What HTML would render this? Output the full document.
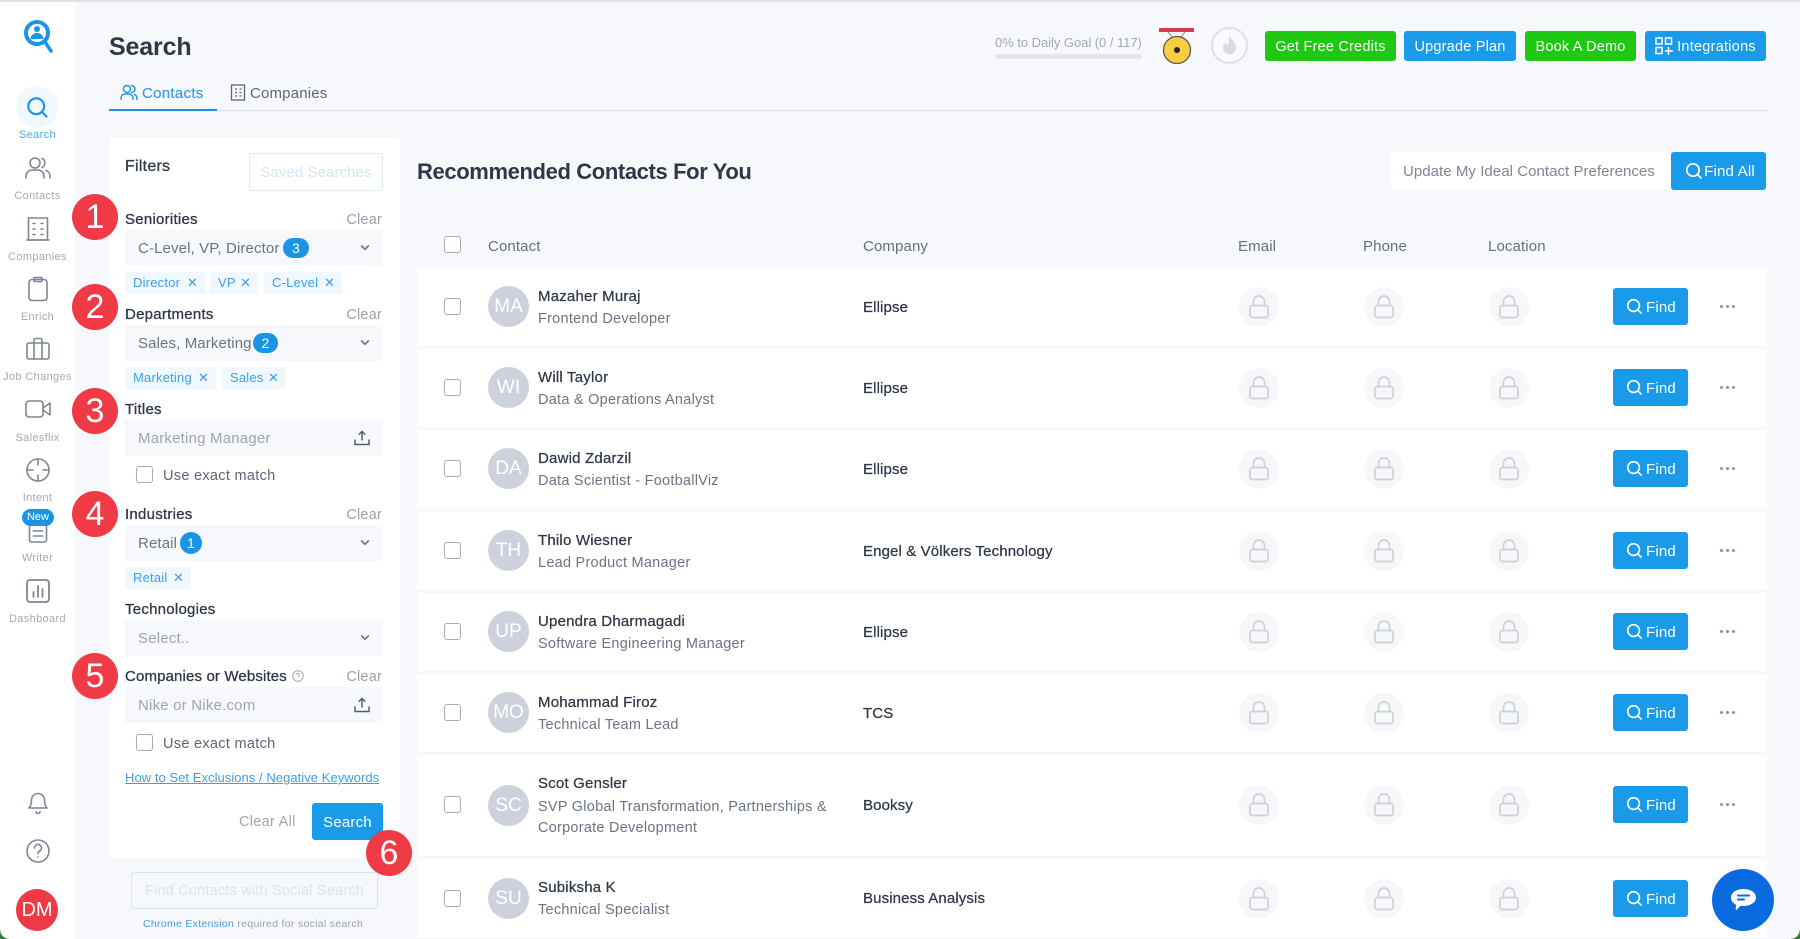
<!DOCTYPE html>
<html lang="en"><head><meta charset="utf-8"><title>Search</title>
<style>
*{box-sizing:border-box}
html,body{margin:0;padding:0}
body{width:1800px;height:939px;position:relative;overflow:hidden;background:#f7f8fb;font-family:"Liberation Sans",sans-serif;color:#2f3747;font-size:15px}
.a,.t,.row,.sel,.tag,.btn,.cb,.bub,.sl,.si{position:absolute}
.t{white-space:nowrap;line-height:20px;margin-top:1px}
.lbl{font-size:15px;color:#2f3747;letter-spacing:.25px;-webkit-text-stroke:.3px currentColor;left:125px}
.clr{font-size:14.5px;color:#9ba1ad;right:1418px;letter-spacing:.2px}
.sel{left:125px;width:258px;height:36px;background:#f7f8fb;border-radius:2px;font-size:15px;color:#6b7385;line-height:38px;padding-left:13px;letter-spacing:.12px}
.sel .ph{color:#9ea4b0;letter-spacing:.2px}
.sel svg{position:absolute}
.bd{position:absolute;top:8px;height:20px;background:#1a95e6;color:#fff;border-radius:10px;font-size:14px;line-height:20px;text-align:center}
.tag{height:22px;background:#f1f8fd;color:#3c9fe2;font-size:13px;line-height:22px;padding-left:8px;border-radius:2px;letter-spacing:.2px}
.tag i{position:absolute;top:0;font-style:normal;font-size:13px}
.btn{background:#1a9bea;color:#fff;border-radius:3px;text-align:center;letter-spacing:.2px}
.g{background:#1fc812}
.cb{width:17px;height:17px;border:1.5px solid #a6abb5;border-radius:3px;background:#fff}
.bub{width:46px;height:46px;border-radius:50%;background:#f03a45;color:#fff;font-size:34px;line-height:46px;text-align:center}
.sl{left:0;width:75px;text-align:center;font-size:11px;color:#a3a8b3;letter-spacing:.35px;line-height:14px;white-space:nowrap;margin-top:1px}
.si{fill:none;stroke:#7e8594;stroke-width:1.6;stroke-linecap:round;stroke-linejoin:round}
.row{left:417px;width:1350px;background:#fff}
.row .cb{left:27px;top:50%;margin-top:-9.5px}
.av{position:absolute;left:71px;top:50%;margin-top:-21px;width:41px;height:41px;border-radius:50%;background:#cdd1db;color:#fff;text-align:center;font-size:19px;line-height:41px}
.nm{left:121px;top:18px;font-size:15px;color:#2f3747;letter-spacing:.2px;-webkit-text-stroke:.25px currentColor}
.sb{left:121px;top:40px;font-size:14.5px;color:#6b7385;letter-spacing:.25px}
.co{left:446px;top:50%;margin-top:-9.5px;font-size:15px;color:#2f3747;letter-spacing:.12px;-webkit-text-stroke:.25px currentColor}
.lk{position:absolute;top:50%;margin-top:-20.5px;width:40px;height:40px;border-radius:50%;background:#f6f7f9}
.lk svg{position:absolute;left:10px;top:8px}
.fd{position:absolute;left:1196px;top:50%;margin-top:-19.5px;width:75px;height:37px;background:#1a9bea;border-radius:3px;color:#fff;font-size:15px;line-height:39px;padding-left:33px;letter-spacing:.2px}
.fd svg{position:absolute;left:13px;top:10px}
.dt{position:absolute;left:1303px;top:50%;margin-top:-2.5px;width:3px;height:3px;border-radius:50%;background:#8b919e;box-shadow:6px 0 0 #8b919e,12px 0 0 #8b919e}
.hd{font-size:15px;color:#666e7e;top:236px;letter-spacing:.12px}
</style></head><body>
<svg width="0" height="0" style="position:absolute"><defs>
<symbol id="lock" viewBox="0 0 20 24"><path d="M4.5 11V6.500a5.500 5.500 0 0 1 11 0V11" fill="none" stroke="#cdd1da" stroke-width="1.700"/><rect x="1" y="10.500" width="18" height="12" rx="2.500" fill="none" stroke="#cdd1da" stroke-width="1.700"/></symbol>
<symbol id="sr" viewBox="0 0 18 18"><circle cx="8" cy="8" r="6.200" fill="none" stroke="currentColor" stroke-width="1.700"/><path d="M12.600 12.600L16 16" stroke="currentColor" stroke-width="1.700" stroke-linecap="round"/></symbol>
<symbol id="chev" viewBox="0 0 10 7"><path d="M1.200 1.500L5 5.200 8.800 1.500" fill="none" stroke="#6f7684" stroke-width="1.700"/></symbol>
<symbol id="up" viewBox="0 0 16 16"><path d="M8 10.500V1.600M4.800 4.600L8 1.400l3.200 3.200M1 9.500v5h14v-5" fill="none" stroke="#565e6d" stroke-width="1.500" stroke-linejoin="round"/></symbol>
</defs></svg>

<div class="a" style="left:0;top:0;width:1800px;height:2px;background:#dfe0e6;z-index:5"></div>
<!-- sidebar -->
<div class="a" style="left:0;top:0;width:75px;height:939px;background:#fff"></div>
<svg class="a" style="left:20px;top:16px" width="36" height="40" viewBox="0 0 36 40"><circle cx="17" cy="17" r="11" fill="#fff" stroke="#1a95e6" stroke-width="4"/><circle cx="17" cy="13" r="3" fill="#1a95e6"/><path d="M10.500 23c.5-4 3-6 6.500-6s6 2 6.500 6z" fill="#1a95e6"/><path d="M25 26l6 9" stroke="#1a95e6" stroke-width="3.500" stroke-linecap="round"/></svg>
<div class="a" style="left:16px;top:86px;width:42px;height:42px;border-radius:50%;background:#f0f8fd"></div>
<svg class="a" style="left:26px;top:96px;color:#1a95e6" width="23" height="23"><use href="#sr"/></svg>
<div class="sl" style="top:127px;color:#4fa9e8">Search</div>
<svg class="si" style="left:24px;top:156px" width="28" height="24" viewBox="0 0 28 24"><circle cx="11" cy="7" r="5"/><path d="M2 22v-2a6 6 0 0 1 6-6h6a6 6 0 0 1 6 6v2M18 2.500a5 5 0 0 1 0 9M22 14.500a6 6 0 0 1 4 5.500v2"/></svg>
<div class="sl" style="top:188px">Contacts</div>
<svg class="si" style="left:26px;top:216px" width="24" height="26" viewBox="0 0 24 26"><rect x="2.500" y="2" width="19" height="22"/><path d="M1 24h22M7 7.500h2M15 7.500h2M7 13h2M15 13h2M7 18.500h2M15 18.500h2"/></svg>
<div class="sl" style="top:249px">Companies</div>
<svg class="si" style="left:27px;top:276px" width="22" height="26" viewBox="0 0 22 26"><rect x="2" y="3.500" width="18" height="21" rx="3"/><rect x="7" y="1.500" width="8" height="4" rx="1"/></svg>
<div class="sl" style="top:309px">Enrich</div>
<svg class="si" style="left:25px;top:337px" width="26" height="24" viewBox="0 0 26 24"><rect x="2" y="6" width="22" height="16" rx="2"/><path d="M9 22V3a1.500 1.500 0 0 1 1.500-1.500h5A1.500 1.500 0 0 1 17 3v19"/></svg>
<div class="sl" style="top:369px">Job Changes</div>
<svg class="si" style="left:24px;top:399px" width="28" height="20" viewBox="0 0 28 20"><rect x="2" y="2" width="17" height="16" rx="3"/><path d="M19 9l7-5v12l-7-5"/></svg>
<div class="sl" style="top:430px">Salesflix</div>
<svg class="si" style="left:25px;top:457px" width="26" height="26" viewBox="0 0 26 26"><circle cx="13" cy="13" r="11"/><path d="M13 2v6M13 18v6M2 13h6M18 13h6"/></svg>
<div class="sl" style="top:490px">Intent</div>
<svg class="si" style="left:27px;top:520px" width="22" height="24" viewBox="0 0 22 24"><rect x="2.500" y="2" width="17" height="20" rx="2"/><path d="M6.500 11h9M6.500 16h9"/></svg>
<div class="a" style="left:22px;top:509px;width:32px;height:17px;border-radius:9px;background:#1a95e6;color:#fff;font-size:11px;line-height:17px;text-align:center">New</div>
<div class="sl" style="top:550px">Writer</div>
<svg class="si" style="left:24px;top:577px;stroke-width:1.800" width="28" height="28" viewBox="0 0 28 28"><rect x="3" y="3" width="22" height="22" rx="3"/><path d="M9.500 20v-5M14 20V9M18.500 20v-8"/></svg>
<div class="sl" style="top:611px">Dashboard</div>
<svg class="si" style="left:26px;top:789px" width="24" height="26" viewBox="0 0 24 26"><path d="M3 19c2-2 2.500-4 2.500-8a6.500 6.500 0 0 1 13 0c0 4 .5 6 2.500 8zM10 22.500a2 2 0 0 0 4 0"/></svg>
<svg class="si" style="left:25px;top:838px" width="26" height="26" viewBox="0 0 26 26"><circle cx="13" cy="13" r="11"/><path d="M9.500 10a3.500 3.500 0 1 1 5.200 3c-1.200.7-1.700 1.300-1.700 2.500M13 19v.1"/></svg>
<div class="a" style="left:16px;top:889px;width:42px;height:42px;border-radius:50%;background:#ef3a46;color:#fff;font-size:20px;line-height:42px;text-align:center">DM</div>
<div class="a" style="left:0;top:930px;width:9px;height:9px;background:radial-gradient(circle at 9px 0,transparent 8.500px,#2c7a3c 9px)"></div>

<!-- header -->
<div class="t" style="left:109px;top:35px;margin-top:0;font-size:25px;font-weight:700;color:#2f3747;line-height:24px;letter-spacing:-.15px">Search</div>
<svg class="a" style="left:120px;top:84px" width="18" height="17" viewBox="0 0 18 17" fill="none" stroke="#1a95e6" stroke-width="1.400" stroke-linecap="round"><circle cx="7" cy="5" r="3.500"/><path d="M1 15.500v-1.500a4 4 0 0 1 4-4h4a4 4 0 0 1 4 4v1.500M11.500 1.500a3.500 3.500 0 0 1 0 7M14.500 10.500a4 4 0 0 1 2.500 3.500v1.500"/></svg>
<div class="t" style="left:142px;top:83px;color:#3c9fe2;font-size:15px;letter-spacing:.3px;-webkit-text-stroke:.25px currentColor">Contacts</div>
<svg class="a" style="left:230px;top:84px" width="16" height="17" viewBox="0 0 16 17" fill="none" stroke="#5d6575" stroke-width="1.300"><rect x="1.500" y="1" width="13" height="15"/><path d="M5 5h2M9.500 5h2M5 8.500h2M9.500 8.500h2M5 12h2M9.500 12h2"/></svg>
<div class="t" style="left:250px;top:83px;color:#5d6575;font-size:15px;letter-spacing:.17px">Companies</div>
<div class="a" style="left:109px;top:110px;width:1658px;height:1px;background:#dfe1e7"></div>
<div class="a" style="left:109px;top:109px;width:108px;height:2px;background:#1a95e6"></div>

<div class="t" style="left:995px;top:32px;font-size:13px;color:#a2a7b2;letter-spacing:-.04px">0% to Daily Goal (0 / 117)</div>
<div class="a" style="left:995px;top:54px;width:147px;height:5px;border-radius:3px;background:#e6e7ec"></div>
<svg class="a" style="left:1159px;top:28px" width="36" height="38" viewBox="0 0 36 38"><rect x="0" y="0" width="35" height="4" fill="#d83a4c"/><path d="M9 4l4 5M26 4l-4 5" stroke="#7b8290" stroke-width="1"/><circle cx="18" cy="22" r="13.500" fill="#f8cd42" stroke="#5a5a4a" stroke-width="1.300"/><circle cx="18" cy="22" r="3" fill="#222"/></svg>
<div class="a" style="left:1211px;top:27px;width:37px;height:37px;border-radius:50%;border:2px solid #dfe1e5;background:#f9fafb"></div>
<svg class="a" style="left:1222px;top:36px" width="15" height="19" viewBox="0 0 15 19"><path d="M8 0c1 3 6 6 6 12a6.500 6.500 0 0 1-13 0c0-3 2-5 3-6 0 2 1 3 2 3 1-3 0-6 2-9z" fill="#d8dadf"/></svg>
<div class="btn g" style="left:1265px;top:31px;width:131px;height:30px;font-size:14.500px;line-height:32px">Get Free Credits</div>
<div class="btn" style="left:1404px;top:31px;width:112px;height:30px;font-size:14.500px;line-height:32px">Upgrade Plan</div>
<div class="btn g" style="left:1525px;top:31px;width:111px;height:30px;font-size:14.500px;line-height:32px">Book A Demo</div>
<div class="btn" style="left:1645px;top:31px;width:121px;height:30px;font-size:14.500px;line-height:32px;padding-left:22px;letter-spacing:.25px">Integrations</div>
<svg class="a" style="left:1655px;top:37px" width="18" height="18" viewBox="0 0 18 18" fill="none" stroke="#fff" stroke-width="1.500"><rect x="1" y="1" width="6" height="6"/><rect x="10.500" y="1" width="6" height="6"/><rect x="1" y="10.500" width="6" height="6"/><path d="M13.500 10v8M10 14h8"/></svg>

<!-- filter panel -->
<div class="a" style="left:109px;top:137px;width:291px;height:720px;background:#fff;border-radius:3px"></div>
<div class="t" style="left:125px;top:156px;font-size:16px;color:#2f3747;letter-spacing:.25px;-webkit-text-stroke:.3px currentColor">Filters</div>
<div class="a" style="left:249px;top:153px;width:134px;height:38px;border:1.500px solid #d7ebf8;border-radius:3px;color:#d4e6f3;font-size:15px;line-height:37px;text-align:center;letter-spacing:.08px">Saved Searches</div>

<div class="t lbl" style="top:209px">Seniorities</div><div class="t clr" style="top:209px">Clear</div>
<div class="sel" style="top:230px">C-Level, VP, Director<span class="bd" style="left:158px;width:26px">3</span><svg style="left:235px;top:14px" width="10" height="7"><use href="#chev"/></svg></div>
<div class="tag" style="left:125px;top:272px;width:80px">Director<i style="left:62px">✕</i></div>
<div class="tag" style="left:210px;top:272px;width:48px">VP<i style="left:30px">✕</i></div>
<div class="tag" style="left:264px;top:272px;width:78px">C-Level<i style="left:60px">✕</i></div>

<div class="t lbl" style="top:304px">Departments</div><div class="t clr" style="top:304px">Clear</div>
<div class="sel" style="top:325px">Sales, Marketing<span class="bd" style="left:128px;width:25px">2</span><svg style="left:235px;top:14px" width="10" height="7"><use href="#chev"/></svg></div>
<div class="tag" style="left:125px;top:367px;width:91px">Marketing<i style="left:73px">✕</i></div>
<div class="tag" style="left:222px;top:367px;width:64px">Sales<i style="left:46px">✕</i></div>

<div class="t lbl" style="top:399px">Titles</div>
<div class="sel" style="top:420px"><span class="ph">Marketing Manager</span><svg style="left:229px;top:10px" width="16" height="16"><use href="#up"/></svg></div>
<div class="cb" style="left:136px;top:466px"></div>
<div class="t" style="left:163px;top:465px;font-size:14.500px;color:#5d6575;letter-spacing:.3px">Use exact match</div>

<div class="t lbl" style="top:504px">Industries</div><div class="t clr" style="top:504px">Clear</div>
<div class="sel" style="top:525px">Retail<span class="bd" style="left:55px;width:22px;border-radius:50%;height:22px;top:7px;line-height:22px">1</span><svg style="left:235px;top:14px" width="10" height="7"><use href="#chev"/></svg></div>
<div class="tag" style="left:125px;top:567px;width:66px">Retail<i style="left:48px">✕</i></div>

<div class="t lbl" style="top:599px">Technologies</div>
<div class="sel" style="top:620px"><span class="ph">Select..</span><svg style="left:235px;top:14px" width="10" height="7"><use href="#chev"/></svg></div>

<div class="t lbl" style="top:666px;letter-spacing:.14px">Companies or Websites</div><div class="t clr" style="top:666px">Clear</div>
<svg class="a" style="left:292px;top:670px" width="12" height="12" viewBox="0 0 12 12" fill="none" stroke="#a3a8b3" stroke-width="1"><circle cx="6" cy="6" r="5.300"/><path d="M4.500 4.800a1.500 1.500 0 1 1 2.200 1.300c-.5.300-.7.600-.7 1.100M6 8.700v.3"/></svg>
<div class="sel" style="top:687px"><span class="ph">Nike or Nike.com</span><svg style="left:229px;top:10px" width="16" height="16"><use href="#up"/></svg></div>
<div class="cb" style="left:136px;top:734px"></div>
<div class="t" style="left:163px;top:733px;font-size:14.500px;color:#5d6575;letter-spacing:.3px">Use exact match</div>
<div class="t" style="left:125px;top:767px;font-size:13px;color:#3c9fe2;text-decoration:underline;letter-spacing:.05px">How to Set Exclusions / Negative Keywords</div>
<div class="t" style="left:239px;top:811px;font-size:14.500px;color:#a0a5b1;letter-spacing:.3px">Clear All</div>
<div class="btn" style="left:312px;top:803px;width:71px;height:37px;font-size:15px;line-height:39px">Search</div>
<div class="a" style="left:131px;top:872px;width:247px;height:37px;border:1.500px solid #d7e6f1;border-radius:3px;color:#d4e6f3;font-size:14.500px;line-height:37px;text-align:center;letter-spacing:.2px">Find Contacts with Social Search</div>
<div class="t" style="left:143px;top:913px;font-size:10.500px;color:#9ba1ad;letter-spacing:.3px"><span style="color:#3c9fe2">Chrome Extension</span> required for social search</div>

<div class="bub" style="left:72px;top:194px">1</div>
<div class="bub" style="left:72px;top:284px">2</div>
<div class="bub" style="left:72px;top:388px">3</div>
<div class="bub" style="left:72px;top:491px">4</div>
<div class="bub" style="left:72px;top:653px">5</div>
<div class="bub" style="left:366px;top:830px;z-index:3">6</div>

<!-- content -->
<div class="t" style="left:417px;top:161px;font-size:22px;font-weight:700;color:#2f3747;letter-spacing:-.38px">Recommended Contacts For You</div>
<div class="a" style="left:1391px;top:152px;width:280px;height:38px;background:#fff;color:#7e8594;font-size:15px;line-height:40px;padding-left:12px;letter-spacing:.05px;white-space:nowrap">Update My Ideal Contact Preferences</div>
<div class="btn" style="left:1671px;top:152px;width:95px;height:38px;font-size:15px;line-height:40px;padding-left:22px">Find All</div>
<svg class="a" style="left:1685px;top:162px;color:#fff" width="18" height="18"><use href="#sr"/></svg>

<div class="cb" style="left:444px;top:236px"></div>
<div class="t hd" style="left:488px">Contact</div>
<div class="t hd" style="left:863px">Company</div>
<div class="t hd" style="left:1238px">Email</div>
<div class="t hd" style="left:1363px">Phone</div>
<div class="t hd" style="left:1488px">Location</div>

<div class="row" style="top:268px;height:78px"><div class="cb"></div><div class="av">MA</div><div class="t nm">Mazaher Muraj</div><div class="t sb">Frontend Developer</div><div class="t co">Ellipse</div><div class="lk" style="left:822px"><svg width="20" height="24"><use href="#lock"/></svg></div><div class="lk" style="left:947px"><svg width="20" height="24"><use href="#lock"/></svg></div><div class="lk" style="left:1072px"><svg width="20" height="24"><use href="#lock"/></svg></div><div class="fd"><svg width="17" height="17"><use href="#sr"/></svg>Find</div><div class="dt"></div></div>
<div class="row" style="top:349px;height:78px"><div class="cb"></div><div class="av">WI</div><div class="t nm">Will Taylor</div><div class="t sb">Data &amp; Operations Analyst</div><div class="t co">Ellipse</div><div class="lk" style="left:822px"><svg width="20" height="24"><use href="#lock"/></svg></div><div class="lk" style="left:947px"><svg width="20" height="24"><use href="#lock"/></svg></div><div class="lk" style="left:1072px"><svg width="20" height="24"><use href="#lock"/></svg></div><div class="fd"><svg width="17" height="17"><use href="#sr"/></svg>Find</div><div class="dt"></div></div>
<div class="row" style="top:430px;height:78px"><div class="cb"></div><div class="av">DA</div><div class="t nm">Dawid Zdarzil</div><div class="t sb">Data Scientist - FootballViz</div><div class="t co">Ellipse</div><div class="lk" style="left:822px"><svg width="20" height="24"><use href="#lock"/></svg></div><div class="lk" style="left:947px"><svg width="20" height="24"><use href="#lock"/></svg></div><div class="lk" style="left:1072px"><svg width="20" height="24"><use href="#lock"/></svg></div><div class="fd"><svg width="17" height="17"><use href="#sr"/></svg>Find</div><div class="dt"></div></div>
<div class="row" style="top:512px;height:78px"><div class="cb"></div><div class="av">TH</div><div class="t nm">Thilo Wiesner</div><div class="t sb">Lead Product Manager</div><div class="t co">Engel &amp; Völkers Technology</div><div class="lk" style="left:822px"><svg width="20" height="24"><use href="#lock"/></svg></div><div class="lk" style="left:947px"><svg width="20" height="24"><use href="#lock"/></svg></div><div class="lk" style="left:1072px"><svg width="20" height="24"><use href="#lock"/></svg></div><div class="fd"><svg width="17" height="17"><use href="#sr"/></svg>Find</div><div class="dt"></div></div>
<div class="row" style="top:593px;height:78px"><div class="cb"></div><div class="av">UP</div><div class="t nm">Upendra Dharmagadi</div><div class="t sb">Software Engineering Manager</div><div class="t co">Ellipse</div><div class="lk" style="left:822px"><svg width="20" height="24"><use href="#lock"/></svg></div><div class="lk" style="left:947px"><svg width="20" height="24"><use href="#lock"/></svg></div><div class="lk" style="left:1072px"><svg width="20" height="24"><use href="#lock"/></svg></div><div class="fd"><svg width="17" height="17"><use href="#sr"/></svg>Find</div><div class="dt"></div></div>
<div class="row" style="top:674px;height:78px"><div class="cb"></div><div class="av">MO</div><div class="t nm">Mohammad Firoz</div><div class="t sb">Technical Team Lead</div><div class="t co">TCS</div><div class="lk" style="left:822px"><svg width="20" height="24"><use href="#lock"/></svg></div><div class="lk" style="left:947px"><svg width="20" height="24"><use href="#lock"/></svg></div><div class="lk" style="left:1072px"><svg width="20" height="24"><use href="#lock"/></svg></div><div class="fd"><svg width="17" height="17"><use href="#sr"/></svg>Find</div><div class="dt"></div></div>
<div class="row" style="top:755px;height:101px"><div class="cb"></div><div class="av">SC</div><div class="t nm">Scot Gensler</div><div class="t sb" style="top:41px;line-height:21px">SVP Global Transformation, Partnerships &amp;<br>Corporate Development</div><div class="t co">Booksy</div><div class="lk" style="left:822px"><svg width="20" height="24"><use href="#lock"/></svg></div><div class="lk" style="left:947px"><svg width="20" height="24"><use href="#lock"/></svg></div><div class="lk" style="left:1072px"><svg width="20" height="24"><use href="#lock"/></svg></div><div class="fd"><svg width="17" height="17"><use href="#sr"/></svg>Find</div><div class="dt"></div></div>
<div class="row" style="top:859px;height:78px"><div class="cb" style="margin-top:-8.500px"></div><div class="av" style="margin-top:-20px">SU</div><div class="t nm">Subiksha K</div><div class="t sb">Technical Specialist</div><div class="t co">Business Analysis</div><div class="lk" style="left:822px;margin-top:-19.500px"><svg width="20" height="24"><use href="#lock"/></svg></div><div class="lk" style="left:947px;margin-top:-19.500px"><svg width="20" height="24"><use href="#lock"/></svg></div><div class="lk" style="left:1072px;margin-top:-19.500px"><svg width="20" height="24"><use href="#lock"/></svg></div><div class="fd" style="margin-top:-18.500px"><svg width="17" height="17"><use href="#sr"/></svg>Find</div></div>

<div class="a" style="left:1712px;top:869px;width:62px;height:62px;border-radius:50%;background:#0a6be0;z-index:4"></div>
<svg class="a" style="left:1730px;top:888px;z-index:5" width="27" height="24" viewBox="0 0 27 24"><path d="M13.500 1C20.500 1 26 4.500 26 9.500S20.500 18 13.500 18c-1 0-2 0-3-.2L7 21.500c-.6.6-1.400.2-1.300-.6l.3-4.100C3 15.200 1 12.700 1 9.500 1 4.500 6.500 1 13.500 1z" fill="#fff"/><path d="M8 7.500h11M8 11.500h6" stroke="#0a6be0" stroke-width="2" stroke-linecap="round"/></svg>
<div class="a" style="left:1791px;top:930px;width:9px;height:9px;background:radial-gradient(circle at 0 0,transparent 8.500px,#2c7a3c 9px)"></div>
</body></html>
